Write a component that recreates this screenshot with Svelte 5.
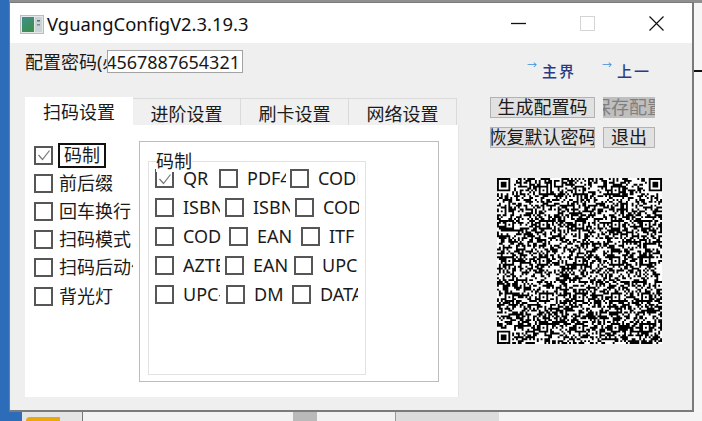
<script>
    const sideItems = [
        { label: '码制', checked: true, focus: true },
        { label: '前后缀' },
        { label: '回车换行' },
        { label: '扫码模式' },
        { label: '扫码后动作' },
        { label: '背光灯' }
    ];

    // name, cell width, visible label width
    const codeRows = [
        [{ n: 'QR', w: 64, l: 27, on: true }, { n: 'PDF417', w: 71, l: 39 }, { n: 'CODE128', w: 68, l: 40 }],
        [{ n: 'ISBN10', w: 70, l: 37 }, { n: 'ISBN13', w: 70, l: 37 }, { n: 'CODE39', w: 64, l: 36 }],
        [{ n: 'CODE93', w: 74, l: 39 }, { n: 'EAN13', w: 72, l: 36 }, { n: 'ITF', w: 58, l: 28 }],
        [{ n: 'AZTEC', w: 70, l: 37 }, { n: 'EAN8', w: 69, l: 36 }, { n: 'UPC-A', w: 64, l: 36 }],
        [{ n: 'UPC-E', w: 71, l: 37 }, { n: 'DM', w: 66, l: 36 }, { n: 'DATABAR', w: 66, l: 38 }]
    ];

    const tabs = ['扫码设置', '进阶设置', '刷卡设置', '网络设置'];

    // fake QR matrix, seeded so the picture stays the same each run
    const SIZE = 87;
    function buildQr() {
        let seed = 20231;
        const rnd = () => {
            seed = (seed * 1103515245 + 12345) & 0x7fffffff;
            return (seed >> 12) % 100;
        };
        const cells = [];
        for (let y = 0; y < SIZE; y++) {
            const row = [];
            for (let x = 0; x < SIZE; x++) row.push(rnd() < 50 ? 1 : 0);
            cells.push(row);
        }
        const stamp = (ox, oy, n, quiet) => {
            for (let y = -quiet; y < n + quiet; y++) {
                for (let x = -quiet; x < n + quiet; x++) {
                    const cy = oy + y, cx = ox + x;
                    if (cy < 0 || cx < 0 || cy >= SIZE || cx >= SIZE) continue;
                    const d = Math.max(Math.abs(x - (n - 1) / 2), Math.abs(y - (n - 1) / 2));
                    const on = n === 7 ? (d <= 1 || d === 3) && d <= 3 : d === 2 || d === 0;
                    cells[cy][cx] = on ? 1 : 0;
                }
            }
        };
        stamp(0, 0, 7, 1);
        stamp(SIZE - 7, 0, 7, 1);
        stamp(0, SIZE - 7, 7, 1);
        for (const a of [6, 24, 43, 62, 78]) {
            for (const b of [6, 24, 43, 62, 78]) {
                if ((a < 10 && b < 10) || (a > 70 && b < 10) || (a < 10 && b > 70)) continue;
                stamp(a - 2, b - 2, 5, 0);
            }
        }
        let d = '';
        cells.forEach((row, y) => row.forEach((v, x) => {
            if (v) d += `M${x} ${y}h1v1h-1z`;
        }));
        return d;
    }
    const qrPath = buildQr();
</script>

<div class="desk">
    <div class="backdrop">
        <span class="bg-top"></span>
        <span class="bg-left"></span>
        <span class="bg-line"></span>
        <div class="taskbar">
            <span class="tb-blue"></span>
            <span class="tb-light"><i></i></span>
            <span class="tb-white"></span>
            <span class="tb-gray"></span>
            <span class="tb-white short"></span>
            <span class="tb-block"></span>
        </div>
    </div>

    <div class="window">
        <header class="titlebar">
            <svg class="app-icon" width="24" height="19" viewBox="0 0 24 19">
                <defs>
                    <linearGradient id="pane" x1="0" y1="0" x2="0.6" y2="1">
                        <stop offset="0" stop-color="#3f8f8a" />
                        <stop offset="1" stop-color="#3c8f4f" />
                    </linearGradient>
                </defs>
                <rect x="0.5" y="0.5" width="23" height="18" fill="#e4e8ea" stroke="#b9bdc0" />
                <rect x="2" y="2" width="12" height="15" fill="url(#pane)" />
                <rect x="15" y="2" width="7" height="15" fill="#c9d2d4" />
                <rect x="17" y="5" width="3" height="1.5" fill="#5d6f75" />
                <rect x="17" y="9" width="3" height="1.5" fill="#7d8c90" />
            </svg>
            <span class="title">VguangConfigV2.3.19.3</span>
            <div class="controls">
                <svg width="15" height="15" viewBox="0 0 15 15"><path d="M0 7.5h15" stroke="#111" stroke-width="1.3" /></svg>
                <svg width="15" height="15" viewBox="0 0 15 15"><rect x="0.5" y="0.5" width="14" height="14" fill="none" stroke="#d4d4d4" /></svg>
                <svg width="15" height="15" viewBox="0 0 15 15"><path d="M0.5 0.5l14 14M14.5 0.5l-14 14" stroke="#111" stroke-width="1.2" /></svg>
            </div>
        </header>

        <div class="body">
            <div class="main">
                <div class="pass-row">
                    <span class="pass-label">配置密码(必填)</span>
                    <div class="pass-input"><span>1234567887654321</span></div>
                </div>

                <div class="tabs">
                    {#each tabs as tab, i}
                        <div class="tab" class:active={i === 0}>{tab}</div>
                    {/each}
                </div>

                <div class="pane">
                    <ul class="side">
                        {#each sideItems as item}
                            <li>
                                <span class="box">
                                    {#if item.checked}
                                        <svg width="14" height="14" viewBox="0 0 14 14"><path d="M1.5 7l4 4.5 7-9" fill="none" stroke="#777" stroke-width="1.2" /></svg>
                                    {/if}
                                </span>
                                <span class="side-label" class:focus={item.focus}>{item.label}</span>
                            </li>
                        {/each}
                    </ul>

                    <div class="group">
                        <div class="frame">
                            <span class="legend">码制</span>
                            {#each codeRows as row}
                                <div class="code-row">
                                    {#each row as c}
                                        <div class="cell" style="width: {c.w}px">
                                            <span class="box">
                                                {#if c.on}
                                                    <svg width="14" height="14" viewBox="0 0 14 14"><path d="M1.5 7l4 4.5 7-9" fill="none" stroke="#777" stroke-width="1.2" /></svg>
                                                {/if}
                                            </span>
                                            <span class="code-label" style="width: {c.l}px">{c.n}</span>
                                        </div>
                                    {/each}
                                </div>
                            {/each}
                        </div>
                    </div>
                </div>
            </div>

            <aside class="right">
                <div class="links">
                    <span class="link first"><i>→</i><b>主界</b></span>
                    <span class="link"><i>→</i><b>上一</b></span>
                </div>
                <div class="buttons">
                    <button class="wide"><span>生成配置码</span></button>
                    <button class="narrow disabled"><span>保存配置</span></button>
                    <button class="wide"><span>恢复默认密码</span></button>
                    <button class="narrow"><span>退出</span></button>
                </div>
                <svg class="qr" width="165" height="166" viewBox="0 0 {SIZE} {SIZE}" preserveAspectRatio="none">
                    <rect width={SIZE} height={SIZE} fill="#fff" />
                    <path d={qrPath} fill="#000" />
                </svg>
            </aside>
        </div>
    </div>
</div>

<style>
    :global(body) {
        margin: 0;
        background: #f6f6f6;
    }

    .desk {
        position: relative;
        width: 702px;
        height: 421px;
        overflow: hidden;
        padding: 2px 0 0 9px;
        box-sizing: border-box;
        font-family: "Noto Sans", "Noto Sans CJK SC", sans-serif;
        font-size: 18px;
        color: #1a1a1a;
    }

    .backdrop span {
        position: absolute;
        display: block;
    }

    .bg-top {
        left: 0;
        top: 0;
        width: 702px;
        height: 3px;
        background: #8f8f8f;
    }

    .bg-left {
        left: 0;
        top: 0;
        width: 9px;
        height: 421px;
        background: #2c6cb8;
    }

    .bg-line {
        left: 694px;
        top: 70px;
        width: 8px;
        height: 2px;
        background: #111;
    }

    .taskbar {
        position: absolute;
        left: 0;
        top: 412px;
        width: 702px;
        height: 9px;
        display: flex;
        background: #f4f4f4;
    }

    .taskbar span {
        position: static;
        height: 9px;
    }

    .tb-blue {
        width: 22px;
        background: #2c6cb8;
    }

    .tb-light {
        position: relative;
        width: 61px;
        background: #e4e4e4;
        border-right: 1px solid #777;
        box-sizing: border-box;
    }

    .tb-light i {
        position: absolute;
        left: 26px;
        top: 5px;
        width: 34px;
        height: 4px;
        background: #eba70c;
        border-radius: 4px 0 0 0;
    }

    .tb-white {
        width: 210px;
        background: #f2f2f2;
    }

    .tb-white.short {
        width: 78px;
    }

    .tb-gray {
        width: 24px;
        background: #b9b9b9;
    }

    .tb-block {
        width: 104px;
        background: #dcdcdc;
        border-left: 1px solid #999;
        box-sizing: border-box;
    }

    .window {
        position: relative;
        width: 685px;
        height: 410px;
        box-sizing: border-box;
        border: 1px solid #7b7b7b;
        border-width: 1px 2px 2px 1px;
        background: #efefef;
        display: flex;
        flex-direction: column;
    }

    .titlebar {
        height: 40px;
        flex: none;
        background: #fff;
        display: flex;
        align-items: center;
        padding: 0 28px 0 10px;
    }

    .app-icon {
        margin-top: 2px;
    }

    .title {
        margin-left: 3px;
        font-size: 18.4px;
        color: #111;
    }

    .controls {
        margin-left: auto;
        display: flex;
        gap: 54px;
    }

    .body {
        flex: 1;
        display: flex;
        padding-left: 15px;
    }

    .main {
        width: 433px;
    }

    .pass-row {
        display: flex;
        margin-top: 7px;
        height: 23px;
        width: 218px;
    }

    .pass-label {
        width: 82px;
        flex: none;
        overflow: hidden;
        white-space: nowrap;
        line-height: 24px;
    }

    .pass-input {
        flex: none;
        width: 136px;
        height: 23px;
        box-sizing: border-box;
        border: 1px solid #a3a3a3;
        background: #fff;
        display: flex;
        justify-content: flex-end;
        overflow: hidden;
        line-height: 22px;
        padding-right: 2px;
    }

    .pass-input span {
        flex: none;
    }

    .tabs {
        display: flex;
        margin-top: 24px;
        height: 28px;
    }

    .tab {
        width: 108px;
        margin-top: 1px;
        box-sizing: border-box;
        background: #f0f0f0;
        border: 1px solid #dadada;
        border-bottom: none;
        border-left: none;
        text-align: center;
        line-height: 28px;
        padding-top: 1px;
    }

    .tab.active {
        margin-top: 0;
        background: #fff;
        border: none;
        line-height: 30px;
        padding-top: 0;
    }

    .pane {
        height: 272px;
        box-sizing: border-box;
        width: 434px;
        background: #fff;
        border: 1px solid #e4e4e4;
        border-width: 0 1px 0 0;
        display: flex;
        padding: 16px 0 0 9px;
    }

    .side {
        list-style: none;
        margin: 0;
        padding: 0;
        width: 105px;
        flex: none;
    }

    .side li {
        height: 28.2px;
        display: flex;
        align-items: center;
        gap: 6px;
        white-space: nowrap;
    }

    .side-label {
        width: 74px;
        overflow: hidden;
        line-height: 25px;
        flex: none;
    }

    .side-label.focus {
        width: auto;
        border: 2px solid #111;
        padding: 0 4px;
        margin-left: -1px;
        line-height: 21px;
    }

    .box {
        width: 19px;
        height: 19px;
        flex: none;
        box-sizing: border-box;
        border: 2px solid #565656;
        background: #fff;
        display: flex;
        align-items: center;
        justify-content: center;
    }

    .group {
        width: 300px;
        height: 241px;
        box-sizing: border-box;
        background: #fff;
        border: 1px solid #bcbcbc;
        padding: 19px 0 0 8px;
    }

    .frame {
        position: relative;
        width: 218px;
        height: 214px;
        box-sizing: border-box;
        border: 1px solid #e2e2e2;
        padding: 2px 0 0 6px;
    }

    .legend {
        position: absolute;
        left: 7px;
        top: -12px;
        background: #fff;
        line-height: 22px;
    }

    .code-row {
        display: flex;
        height: 29px;
        align-items: center;
    }

    .cell {
        display: flex;
        align-items: center;
        gap: 9px;
        flex: none;
    }

    .code-label {
        overflow: hidden;
        white-space: nowrap;
        flex: none;
        line-height: 25px;
    }

    .right {
        margin-left: 32px;
        width: 165px;
    }

    .links {
        display: flex;
        height: 18px;
        margin-top: 17px;
        padding-left: 37px;
    }

    .link {
        display: flex;
        width: 75px;
        flex: none;
    }

    .link i {
        font-style: normal;
        font-size: 10px;
        line-height: 10px;
        color: #3d94e0;
        width: 15px;
        flex: none;
    }

    .link b {
        font-family: "Noto Sans CJK SC", sans-serif;
        font-size: 15px;
        font-weight: 500;
        letter-spacing: 2px;
        line-height: 20px;
        margin-top: 1px;
        color: #2b3a82;
        white-space: nowrap;
    }

    .buttons {
        display: grid;
        grid-template-columns: 105px 52px;
        grid-auto-rows: 21px;
        column-gap: 8px;
        row-gap: 9px;
        margin-top: 19px;
    }

    button {
        margin: 0;
        padding: 0;
        box-sizing: border-box;
        border: 1px solid #b2b2b2;
        background: #e1e1e1;
        font: inherit;
        color: #1a1a1a;
        display: flex;
        align-items: center;
        justify-content: center;
        overflow: hidden;
        white-space: nowrap;
    }

    button span {
        flex: none;
        line-height: 19px;
    }

    button.disabled {
        background: #bfbfbf;
        border: none;
        color: #7f7f7f;
    }

    .qr {
        display: block;
        margin: 30px 0 0 7px;
    }
</style>
